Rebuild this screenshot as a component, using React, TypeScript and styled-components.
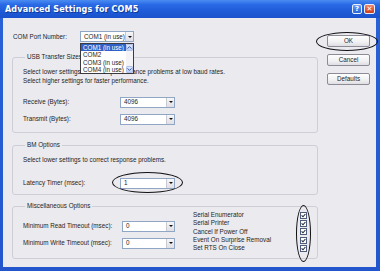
import React from 'react';
import styled, { createGlobalStyle } from 'styled-components';

const Global = createGlobalStyle`
  html, body { margin: 0; padding: 0; background: #ffffff; }
  body { font-family: "Liberation Sans", Arial, sans-serif; color: #1e1e22; }
  * { box-sizing: border-box; }
`;

const Window = styled.div`
  width: 380px;
  height: 271px;
  display: flex;
  flex-direction: column;
  background: linear-gradient(180deg, #2a62d8 0%, #2356cc 100%);
  overflow: hidden;
`;

const TitleBar = styled.div`
  height: 18px;
  flex: none;
  display: flex;
  align-items: center;
  padding: 0 5px 0 5px;
  background: linear-gradient(180deg, #4a8cf2 0%, #2a6ae6 25%, #1f5bd8 60%, #1a52cc 100%);
`;

const TitleText = styled.div`
  font-family: "DejaVu Sans", sans-serif;
  font-weight: bold;
  font-size: 8.1px;
  color: #ffffff;
  text-shadow: 1px 1px 0 #0d3a9a;
  letter-spacing: 0.1px;
`;

const TitleButtons = styled.div`
  margin-left: auto;
  display: flex;
  gap: 2px;
  align-items: center;
`;

const CapButton = styled.div<{ $red?: boolean; $w: number }>`
  width: ${(p) => p.$w}px;
  height: 10px;
  border-radius: 2px;
  border: 1px solid #e8eefc;
  background: ${(p) =>
    p.$red
      ? 'linear-gradient(180deg, #f0876c 0%, #e0532f 60%, #c8401f 100%)'
      : 'linear-gradient(180deg, #6fa2f4 0%, #3d78e4 60%, #2f66d6 100%)'};
  color: #fff;
  font-family: "DejaVu Sans", sans-serif;
  font-weight: bold;
  font-size: 7px;
  display: flex;
  align-items: center;
  justify-content: center;
  line-height: 1;
`;

const Client = styled.div`
  flex: 1;
  margin: 0 4px 4px 3px;
  background: #ebeaef;
  display: flex;
  font-size: 6.3px;
  line-height: 8px;
`;

const Main = styled.div`
  width: 306px;
  margin-left: 9px;
  padding-top: 13px;
  display: flex;
  flex-direction: column;
`;

const PortRow = styled.div`
  display: flex;
  align-items: center;
  height: 11px;
  padding-left: 1px;
`;

const PortLabel = styled.div`
  width: 67px;
`;

const Anchor = styled.div`
  position: relative;
`;

const ComboBox = styled.div<{ $w: number }>`
  width: ${(p) => p.$w}px;
  height: 11px;
  background: #ffffff;
  border: 1px solid #8fa7c4;
  display: flex;
  align-items: center;
  padding-left: 3px;
  font-size: 6.3px;
`;

const ComboArrow = styled.div`
  margin-left: auto;
  width: 8px;
  height: 9px;
  background: linear-gradient(180deg, #f7f7f9 0%, #dedee4 100%);
  border-left: 1px solid #c9c9d0;
  display: flex;
  align-items: center;
  justify-content: center;
`;

const Tri = styled.div`
  width: 0;
  height: 0;
  border-left: 2px solid transparent;
  border-right: 2px solid transparent;
  border-top: 2px solid #111;
`;

const DropList = styled.div`
  position: absolute;
  left: 0;
  top: 12px;
  width: 54px;
  height: 31px;
  background: #ffffff;
  border: 1px solid #3a3a40;
  display: flex;
  z-index: 5;
`;

const DropItems = styled.div`
  flex: 1;
  display: flex;
  flex-direction: column;
`;

const DropItem = styled.div<{ $sel?: boolean }>`
  height: 7.3px;
  line-height: 7.3px;
  padding-left: 2px;
  font-size: 6.3px;
  white-space: nowrap;
  background: ${(p) => (p.$sel ? '#2f62c8' : 'transparent')};
  color: ${(p) => (p.$sel ? '#ffffff' : '#1e1e22')};
`;

const ScrollBar = styled.div`
  width: 7px;
  display: flex;
  flex-direction: column;
  justify-content: space-between;
  background: #f3f3f6;
`;

const ScrollBtn = styled.div`
  width: 7px;
  height: 7px;
  border-radius: 1px;
  background: linear-gradient(180deg, #dfe8fc 0%, #b9cdf6 100%);
  border: 1px solid #b0c2ea;
  display: flex;
  align-items: center;
  justify-content: center;
`;

const Group = styled.fieldset<{ $mt: number; $pt: number; $pb: number }>`
  margin: ${(p) => p.$mt}px 0 0 0;
  padding: ${(p) => p.$pt}px 10px ${(p) => p.$pb}px 10px;
  border: 1px solid #cfcdd6;
  border-radius: 3px;
  min-width: 0;
`;

const Legend = styled.legend`
  padding: 0 2px;
  margin-left: 2px;
  font-size: 6.3px;
  line-height: 8px;
`;

const Note = styled.div`
  line-height: 9px;
`;

const FieldRow = styled.div<{ $mt: number; $lw: number }>`
  display: flex;
  align-items: center;
  height: 12px;
  margin-top: ${(p) => p.$mt}px;
  & > span {
    width: ${(p) => p.$lw}px;
    flex: none;
  }
`;

const MiscBody = styled.div`
  display: flex;
`;

const MiscLeft = styled.div`
  width: 160px;
  padding-top: 9px;
`;

const CheckList = styled.div`
  position: relative;
  margin-left: 10px;
  width: 114px;
  display: flex;
  flex-direction: column;
`;

const CheckRow = styled.div`
  height: 8.3px;
  display: flex;
  align-items: center;
  justify-content: space-between;
`;

const CheckBox = styled.div`
  width: 7px;
  height: 7px;
  background: #ffffff;
  border: 1px solid #4c5e7c;
  display: flex;
  align-items: center;
  justify-content: center;
`;

const Side = styled.div`
  margin-left: 9px;
  padding-top: 17px;
  display: flex;
  flex-direction: column;
  gap: 7px;
`;

const Button = styled.div`
  width: 43px;
  height: 12px;
  border: 1px solid #8d8c96;
  border-radius: 2px;
  background: linear-gradient(180deg, #fefefe 0%, #f1f1f3 60%, #dedde3 100%);
  display: flex;
  align-items: center;
  justify-content: center;
  font-size: 6.3px;
`;

const Ellipse = styled.div<{ $l: number; $t: number; $w: number; $h: number }>`
  position: absolute;
  left: ${(p) => p.$l}px;
  top: ${(p) => p.$t}px;
  width: ${(p) => p.$w}px;
  height: ${(p) => p.$h}px;
  border: 1.7px solid #111114;
  border-radius: 50%;
  pointer-events: none;
`;

const Combo: React.FC<{ w: number; value: string }> = ({ w, value }) => (
  <ComboBox $w={w}>
    {value}
    <ComboArrow>
      <Tri />
    </ComboArrow>
  </ComboBox>
);

const Chevron: React.FC<{ up?: boolean }> = ({ up }) => (
  <svg width="5" height="3" viewBox="0 0 5 3">
    <path d={up ? 'M0.5 2.6 L2.5 0.6 L4.5 2.6' : 'M0.5 0.4 L2.5 2.4 L4.5 0.4'} fill="none" stroke="#3d5a9a" strokeWidth="1" />
  </svg>
);

const Check: React.FC = () => (
  <svg width="5" height="5" viewBox="0 0 5 5">
    <path d="M0.6 2.4 L2 3.8 L4.4 1" fill="none" stroke="#2a2a30" strokeWidth="1.1" />
  </svg>
);

const checks = ['Serial Enumerator', 'Serial Printer', 'Cancel If Power Off', 'Event On Surprise Removal', 'Set RTS On Close'];

export default function App() {
  return (
    <>
      <Global />
      <Window>
        <TitleBar>
          <TitleText>Advanced Settings for COM5</TitleText>
          <TitleButtons>
            <CapButton $w={10}>?</CapButton>
            <CapButton $w={11} $red>✕</CapButton>
          </TitleButtons>
        </TitleBar>
        <Client>
          <Main>
            <PortRow>
              <PortLabel>COM Port Number:</PortLabel>
              <Anchor>
                <Combo w={54} value="COM1 (in use)" />
                <DropList>
                  <DropItems>
                    <DropItem $sel>COM1 (in use)</DropItem>
                    <DropItem>COM2</DropItem>
                    <DropItem>COM3 (in use)</DropItem>
                    <DropItem>COM4 (in use)</DropItem>
                  </DropItems>
                  <ScrollBar>
                    <ScrollBtn><Chevron up /></ScrollBtn>
                    <ScrollBtn><Chevron /></ScrollBtn>
                  </ScrollBar>
                </DropList>
              </Anchor>
            </PortRow>

            <Group $mt={11} $pt={6} $pb={7}>
              <Legend>USB Transfer Sizes</Legend>
              <Note>Select lower settings to correct performance problems at low baud rates.</Note>
              <Note>Select higher settings for faster performance.</Note>
              <FieldRow $mt={11} $lw={97}>
                <span>Receive (Bytes):</span>
                <Combo w={55} value="4096" />
              </FieldRow>
              <FieldRow $mt={5} $lw={97}>
                <span>Transmit (Bytes):</span>
                <Combo w={55} value="4096" />
              </FieldRow>
            </Group>

            <Group $mt={8} $pt={6} $pb={5}>
              <Legend>BM Options</Legend>
              <Note>Select lower settings to correct response problems.</Note>
              <FieldRow $mt={13} $lw={97}>
                <span>Latency Timer (msec):</span>
                <Anchor>
                  <Combo w={55} value="1" />
                  <Ellipse $l={-8} $t={-6} $w={71} $h={21} />
                </Anchor>
              </FieldRow>
            </Group>

            <Group $mt={7} $pt={1} $pb={6}>
              <Legend>Miscellaneous Options</Legend>
              <MiscBody>
                <MiscLeft>
                  <FieldRow $mt={0} $lw={99}>
                    <span>Minimum Read Timeout (msec):</span>
                    <Combo w={53} value="0" />
                  </FieldRow>
                  <FieldRow $mt={5} $lw={99}>
                    <span>Minimum Write Timeout (msec):</span>
                    <Combo w={53} value="0" />
                  </FieldRow>
                </MiscLeft>
                <CheckList>
                  {checks.map((c) => (
                    <CheckRow key={c}>
                      <span>{c}</span>
                      <CheckBox>
                        <Check />
                      </CheckBox>
                    </CheckRow>
                  ))}
                  <Ellipse $l={103} $t={-6} $w={15} $h={57} />
                </CheckList>
              </MiscBody>
            </Group>
          </Main>

          <Side>
            <Anchor>
              <Button>OK</Button>
              <Ellipse $l={-11} $t={-3} $w={62} $h={19} />
            </Anchor>
            <Button>Cancel</Button>
            <Button>Defaults</Button>
          </Side>
        </Client>
      </Window>
    </>
  );
}
